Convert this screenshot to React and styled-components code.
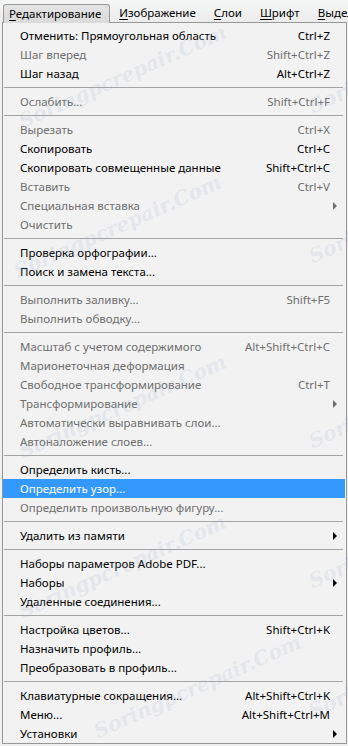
import React from "react";
import styled, { createGlobalStyle } from "styled-components";

const GlobalStyle = createGlobalStyle`
  html, body { margin: 0; padding: 0; background: #f0f0f0; }
  body { font-family: "Noto Sans", "Open Sans", "DejaVu Sans", sans-serif; font-size: 11.5px; }
  #root { width: 348px; height: 746px; overflow: hidden; position: relative; }
`;

const Page = styled.div`
  width: 348px;
  height: 746px;
  display: flex;
  flex-direction: column;
  background: #f0f0f0;
  position: relative;
  overflow: hidden;
`;

const MenuBar = styled.div`
  height: 22px;
  display: flex;
  align-items: flex-end;
  padding-left: 3px;
  background: linear-gradient(#f5f6f7, #ececec);
  box-sizing: border-box;
`;

const BarItem = styled.div`
  height: 19px;
  box-sizing: border-box;
  display: flex;
  align-items: center;
  padding: ${p => (p.$active ? "0 8px 1px 5px" : "0 8px 1px 8px")};
  color: #000;
  font-size: 11.5px;
  white-space: nowrap;
  border: 1px solid ${p => (p.$active ? "#9a9a9a" : "transparent")};
  border-bottom: none;
  border-radius: 3px 3px 0 0;
  background: ${p => (p.$active ? "linear-gradient(#e4e4e4, #dadada)" : "transparent")};
  margin-bottom: ${p => (p.$active ? "-1px" : "0")};
  position: relative;
  z-index: 2;
  u { text-decoration: underline; text-underline-offset: 2px; }
`;

const Dropdown = styled.div`
  margin-left: 2px;
  width: 345px;
  height: 722px;
  box-sizing: border-box;
  border: 1px solid #979797;
  background: #f2f2f2;
  padding: 3px 1px 0 0;
  display: flex;
  flex-direction: column;
  position: relative;
  z-index: 1;
`;

const Row = styled.div`
  height: 19px;
  flex: 0 0 19px;
  display: flex;
  align-items: center;
  padding: 0 15px 0 17px;
  box-sizing: border-box;
  color: ${p => (p.$highlight ? "#ffffff" : p.$disabled ? "#6e6e6e" : "#000000")};
  background: ${p => (p.$highlight ? "#3399ff" : "transparent")};
  white-space: nowrap;
  position: relative;
`;

const Label = styled.span`
  flex: 1;
`;

const Shortcut = styled.span`
  text-align: right;
`;

const Arrow = styled.span`
  position: absolute;
  right: 8px;
  top: 6px;
  width: 0;
  height: 0;
  border-top: 4px solid transparent;
  border-bottom: 4px solid transparent;
  border-left: 4px solid ${p => (p.$disabled ? "#6e6e6e" : "#000")};
`;

const Separator = styled.div`
  flex: 0 0 9px;
  display: flex;
  align-items: center;
  padding: 0 2px 0 1px;
  &::after {
    content: "";
    flex: 1;
    height: 1px;
    background: #a5a5a5;
  }
`;

const Watermark = styled.div`
  position: absolute;
  left: ${p => p.$x}px;
  top: ${p => p.$y}px;
  font-family: "DejaVu Serif", "Liberation Serif", serif;
  font-style: italic;
  font-weight: bold;
  font-size: 20px;
  color: rgba(150, 170, 200, 0.18);
  transform: rotate(-24deg);
  transform-origin: left center;
  white-space: nowrap;
  pointer-events: none;
  z-index: 3;
`;

const items = [
  { l: "Отменить: Прямоугольная область", s: "Ctrl+Z" },
  { l: "Шаг вперед", s: "Shift+Ctrl+Z", d: true },
  { l: "Шаг назад", s: "Alt+Ctrl+Z" },
  "sep",
  { l: "Ослабить...", s: "Shift+Ctrl+F", d: true },
  "sep",
  { l: "Вырезать", s: "Ctrl+X", d: true },
  { l: "Скопировать", s: "Ctrl+C" },
  { l: "Скопировать совмещенные данные", s: "Shift+Ctrl+C" },
  { l: "Вставить", s: "Ctrl+V", d: true },
  { l: "Специальная вставка", d: true, sub: true },
  { l: "Очистить", d: true },
  "sep",
  { l: "Проверка орфографии..." },
  { l: "Поиск и замена текста..." },
  "sep",
  { l: "Выполнить заливку...", s: "Shift+F5", d: true },
  { l: "Выполнить обводку...", d: true },
  "sep",
  { l: "Масштаб с учетом содержимого", s: "Alt+Shift+Ctrl+C", d: true },
  { l: "Марионеточная деформация", d: true },
  { l: "Свободное трансформирование", s: "Ctrl+T", d: true },
  { l: "Трансформирование", d: true, sub: true },
  { l: "Автоматически выравнивать слои...", d: true },
  { l: "Автоналожение слоев...", d: true },
  "sep",
  { l: "Определить кисть..." },
  { l: "Определить узор...", h: true },
  { l: "Определить произвольную фигуру...", d: true },
  "sep",
  { l: "Удалить из памяти", sub: true },
  "sep",
  { l: "Наборы параметров Adobe PDF..." },
  { l: "Наборы", sub: true },
  { l: "Удаленные соединения..." },
  "sep",
  { l: "Настройка цветов...", s: "Shift+Ctrl+K" },
  { l: "Назначить профиль..." },
  { l: "Преобразовать в профиль..." },
  "sep",
  { l: "Клавиатурные сокращения...", s: "Alt+Shift+Ctrl+K" },
  { l: "Меню...", s: "Alt+Shift+Ctrl+M" },
  { l: "Установки", sub: true },
];

const marks = [
  { x: 20, y: 110 },
  { x: 15, y: 260 },
  { x: 20, y: 440 },
  { x: 20, y: 600 },
  { x: 95, y: 720 },
  { x: 310, y: 95 },
  { x: 310, y: 245 },
  { x: 310, y: 430 },
  { x: 310, y: 570 },
  { x: 310, y: 700 },
];

export default function App() {
  return (
    <Page>
      <GlobalStyle />
      <MenuBar>
        <BarItem $active><span><u>Р</u>едактирование</span></BarItem>
        <BarItem><span><u>И</u>зображение</span></BarItem>
        <BarItem><span><u>С</u>лои</span></BarItem>
        <BarItem><span><u>Ш</u>рифт</span></BarItem>
        <BarItem><span><u>В</u>ыделение</span></BarItem>
      </MenuBar>
      <Dropdown>
        {items.map((it, i) =>
          it === "sep" ? (
            <Separator key={i} />
          ) : (
            <Row key={i} $disabled={it.d} $highlight={it.h}>
              <Label>{it.l}</Label>
              {it.s && <Shortcut>{it.s}</Shortcut>}
              {it.sub && <Arrow $disabled={it.d} />}
            </Row>
          )
        )}
      </Dropdown>
      {marks.map((m, i) => (
        <Watermark key={i} $x={m.x} $y={m.y}>Soringpcrepair.Com</Watermark>
      ))}
    </Page>
  );
}
